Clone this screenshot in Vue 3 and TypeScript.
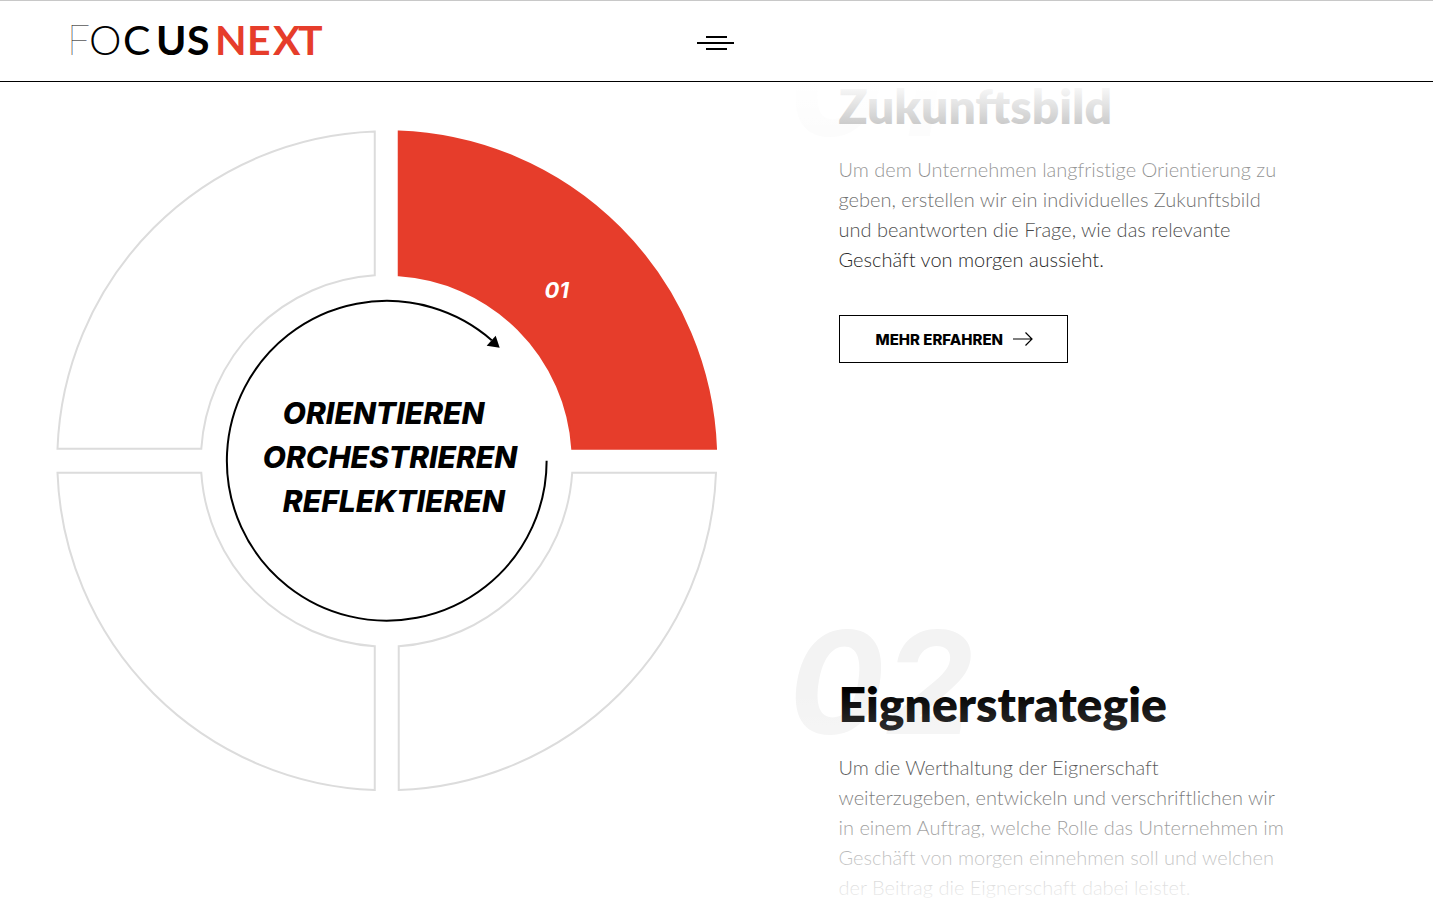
<script setup lang="ts">
interface Topic {
  number: string
  title: string
  lines: string[]
  action?: string
}

const topics: Topic[] = [
  {
    number: '01',
    title: 'Zukunftsbild',
    lines: [
      'Um dem Unternehmen langfristige Orientierung zu',
      'geben, erstellen wir ein individuelles Zukunftsbild',
      'und beantworten die Frage, wie das relevante',
      'Geschäft von morgen aussieht.',
    ],
    action: 'MEHR ERFAHREN',
  },
  {
    number: '02',
    title: 'Eignerstrategie',
    lines: [
      'Um die Werthaltung der Eignerschaft',
      'weiterzugeben, entwickeln und verschriftlichen wir',
      'in einem Auftrag, welche Rolle das Unternehmen im',
      'Geschäft von morgen einnehmen soll und welchen',
      'der Beitrag die Eignerschaft dabei leistet.',
    ],
  },
]

// Quarter segment in the upper right, relative to the ring centre
const segment = 'M12 -329.5A329.7 329.7 0 0 1 329.5 -12H185.6A186 186 0 0 0 12 -185.6Z'
const idleScales = ['scale(-1 1)', 'scale(-1 -1)', 'scale(1 -1)']
</script>

<template>
  <div class="page">
    <header class="header">
      <a class="logo" href="#" aria-label="FocusNext">
        <svg width="256" height="36" viewBox="0 0 256 36">
          <text y="32" class="wordmark">
            <tspan class="w1" x="-3">F</tspan>
            <tspan class="w2" x="19">O</tspan>
            <tspan class="w3" x="53">C</tspan>
            <tspan class="w4" x="86">U</tspan>
            <tspan class="w4" x="117">S</tspan>
            <tspan class="next" x="145 177 203 228">NEXT</tspan>
          </text>
        </svg>
      </a>
      <button class="menu" type="button" aria-label="Menü">
        <svg width="39" height="14" viewBox="0 0 39 14">
          <path d="M9 1H30M0 7H37M9 13H30" stroke="#000" stroke-width="2" />
        </svg>
      </button>
    </header>

    <main class="stage">
      <section class="wheel">
        <svg viewBox="0 0 661 661">
          <g transform="translate(331 331)">
            <path v-for="s in idleScales" :key="s" :d="segment" :transform="s" class="idle" />
            <path :d="segment" class="active" />
            <path d="M160 0A160 160 0 1 1 105 -120.7" class="orbit" />
            <path d="M113 -113L109 -125L100 -115Z" />
          </g>
          <text x="489" y="168" class="index">01</text>
          <text class="claim">
            <tspan x="227" y="294">ORIENTIEREN</tspan>
            <tspan x="207" y="338">ORCHESTRIEREN</tspan>
            <tspan x="227" y="382">REFLEKTIEREN</tspan>
          </text>
        </svg>
      </section>

      <section class="topics">
        <article v-for="t in topics" :key="t.number" class="topic">
          <span class="ghost" aria-hidden="true">{{ t.number }}</span>
          <h2>{{ t.title }}</h2>
          <p><span v-for="line in t.lines" :key="line">{{ line }}</span></p>
          <a v-if="t.action" class="more" href="#">
            {{ t.action }}
            <svg width="20" height="14" viewBox="0 0 20 14">
              <path d="M0 7H19M12.5 .5L19 7L12.5 13.5" fill="none" stroke="#000" stroke-width="1.2" />
            </svg>
          </a>
        </article>
      </section>
    </main>
  </div>
</template>

<style>
body {
  margin: 0;
  background: #fff;
}
</style>

<style scoped>
.page {
  display: flex;
  flex-direction: column;
  height: 100vh;
  overflow: hidden;
  box-sizing: border-box;
  color: #000;
  font-family: Lato, "Open Sans", sans-serif;
}

.header {
  display: grid;
  grid-template-columns: 1fr 39px 1fr;
  flex: none;
  align-items: center;
  height: 80px;
  border-top: 1px solid #c8c8c8;
  border-bottom: 1px solid #000;
}

.logo {
  display: block;
  padding-left: 70px;
}

.logo svg,
.menu svg {
  display: block;
  overflow: visible;
}

.wordmark {
  font-size: 41px;
}

.w1 { font-weight: 100; }
.w2 { font-weight: 300; }
.w3 { font-weight: 400; }
.w4 { font-weight: 700; }

.next {
  font-weight: 700;
  fill: #e63d2b;
}

.menu {
  margin: 4px 0 0;
  padding: 0;
  border: 0;
  background: none;
  cursor: pointer;
}

.stage {
  display: grid;
  grid-template-columns: 1fr 1fr;
  flex: 1;
  min-height: 0;
}

.wheel {
  padding: 48px 0 0 56px;
}

.wheel svg {
  display: block;
  width: 100%;
  overflow: visible;
}

.idle {
  fill: #fff;
  stroke: #dcdcdc;
  stroke-width: 2;
}

.active {
  fill: #e63d2b;
  stroke: #e63d2b;
  stroke-width: 2;
}

.orbit {
  fill: none;
  stroke: #000;
  stroke-width: 2;
}

.index,
.claim,
.ghost {
  font-family: Inter, Lato, sans-serif;
  font-weight: 700;
  font-style: italic;
}

.index {
  fill: #fff;
  font-size: 22px;
}

.claim {
  font-size: 30px;
  font-weight: 800;
}

.topics {
  position: relative;
  overflow: hidden;
  padding-left: 122px;
}

.topics::after {
  content: "";
  position: absolute;
  inset: 0;
  background: linear-gradient(#fff, rgba(255, 255, 255, 0) 25%, rgba(255, 255, 255, 0) 73%, #fff);
  pointer-events: none;
}

.topic {
  position: relative;
  min-height: 598px;
}

.ghost {
  position: absolute;
  top: -70px;
  left: -50px;
  color: #f3f3f3;
  font-size: 142px;
  line-height: 144px;
}

h2 {
  position: relative;
  margin: 0 0 24px;
  font-size: 48px;
  font-weight: 800;
  line-height: 48px;
}

p {
  position: relative;
  margin: 0;
  font-size: 20px;
  font-variant-ligatures: none;
  font-weight: 300;
  line-height: 30px;
}

p span {
  display: block;
  white-space: nowrap;
}

.more {
  display: inline-flex;
  align-items: center;
  gap: 10px;
  box-sizing: border-box;
  height: 48px;
  margin-top: 41px;
  padding: 0 34px 0 36px;
  border: 1px solid #000;
  color: #000;
  font-family: Inter, Lato, sans-serif;
  font-size: 15px;
  font-weight: 800;
  text-decoration: none;
}
</style>
